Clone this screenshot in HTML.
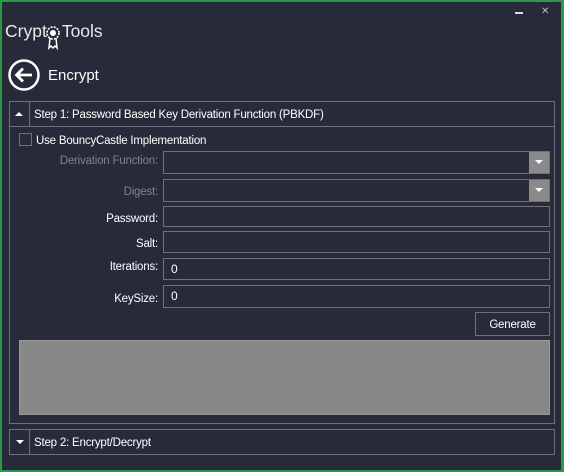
<!DOCTYPE html>
<html><head><meta charset="utf-8"><style>
*{box-sizing:border-box;margin:0;padding:0}
body{width:564px;height:472px;background:#272a38;font-family:"Liberation Sans",sans-serif;color:#fff;position:relative;overflow:hidden}
.frame{position:absolute;left:0;top:0;width:564px;height:472px;border:2px solid #2a9a48;border-right-width:3px;border-bottom-width:2px}
.abs{position:absolute}
.box{position:absolute;border:1px solid #6e707c}
.lbl{position:absolute;right:406px;font-size:11.5px;letter-spacing:-0.2px;text-align:right;white-space:nowrap}
.inp{position:absolute;left:163px;width:387px;border:1px solid #6e707c;font-size:12px;padding-left:7px}
.dd{position:absolute;right:0;top:0;width:20px;height:100%;background:#8a8a8a}
.dd:after{content:"";position:absolute;left:6px;top:8px;border-left:4px solid transparent;border-right:4px solid transparent;border-top:4px solid #fff}
.t{font-size:11.5px;letter-spacing:-0.2px}
</style></head><body>
<div class="frame"></div>
<div class="abs" style="left:515px;top:12px;width:8px;height:2px;background:#ddd"></div>
<div class="abs" style="left:541px;top:6px;font-size:10px;color:#bbb">✕</div>
<div class="abs" style="left:5px;top:21px;font-size:17.5px;color:#e8e8e8">Crypt<span style="display:inline-block;width:15px"></span>Tools</div>
<svg class="abs" style="left:45px;top:26px" width="16" height="24" viewBox="0 0 16 24"><circle cx="8" cy="7" r="6" fill="none" stroke="#fff" stroke-width="1.6" stroke-dasharray="2 1.2"/><circle cx="8" cy="7" r="3" fill="#fff"/><path d="M5 12 L4 22 L6 20 L8 22 L10 20 L12 22 L11 12" fill="none" stroke="#fff" stroke-width="1.5"/></svg>
<svg class="abs" style="left:8px;top:59px" width="32" height="32" viewBox="0 0 32 32"><circle cx="16" cy="16" r="14.5" fill="none" stroke="#fff" stroke-width="2.5"/><path d="M24 16 H9 M15 9.5 L8.5 16 L15 22.5" fill="none" stroke="#fff" stroke-width="2.8"/></svg>
<div class="abs" style="left:48px;top:67px;font-size:15px">Encrypt</div>

<div class="box" style="left:9px;top:101px;width:546px;height:26px"></div>
<div class="abs" style="left:29px;top:101px;width:1px;height:26px;background:#6e707c"></div>
<div class="abs" style="left:15px;top:112px;border-left:4px solid transparent;border-right:4px solid transparent;border-bottom:4px solid #fff"></div>
<div class="abs t" style="left:34px;top:109px">Step 1: Password Based Key Derivation Function (PBKDF)</div>
<div class="box" style="left:9px;top:126px;width:546px;height:298px"></div>

<div class="box" style="left:19px;top:133px;width:13px;height:13px"></div>
<div class="abs t" style="left:36px;top:135px">Use BouncyCastle Implementation</div>

<div class="lbl" style="top:155px;color:#80828c">Derivation Function:</div>
<div class="inp" style="top:151px;height:23px"><div class="dd"></div></div>
<div class="lbl" style="top:186px;color:#80828c">Digest:</div>
<div class="inp" style="top:179px;height:23px"><div class="dd"></div></div>
<div class="lbl" style="top:213px">Password:</div>
<div class="inp" style="top:206px;height:21px"></div>
<div class="lbl" style="top:238px">Salt:</div>
<div class="inp" style="top:231px;height:22px"></div>
<div class="lbl" style="top:261px">Iterations:</div>
<div class="inp" style="top:258px;height:22px;line-height:21px">0</div>
<div class="lbl" style="top:293px">KeySize:</div>
<div class="inp" style="top:285px;height:23px;line-height:21px">0</div>
<div class="box t" style="left:475px;top:312px;width:75px;height:24px;text-align:center;line-height:24px">Generate</div>
<div class="abs" style="left:19px;top:340px;width:531px;height:75px;background:#888;border:1px solid #999"></div>

<div class="box" style="left:9px;top:429px;width:546px;height:26px"></div>
<div class="abs" style="left:29px;top:429px;width:1px;height:26px;background:#6e707c"></div>
<div class="abs" style="left:16px;top:440px;border-left:4px solid transparent;border-right:4px solid transparent;border-top:4px solid #fff"></div>
<div class="abs t" style="left:34px;top:437px">Step 2: Encrypt/Decrypt</div>
</body></html>
